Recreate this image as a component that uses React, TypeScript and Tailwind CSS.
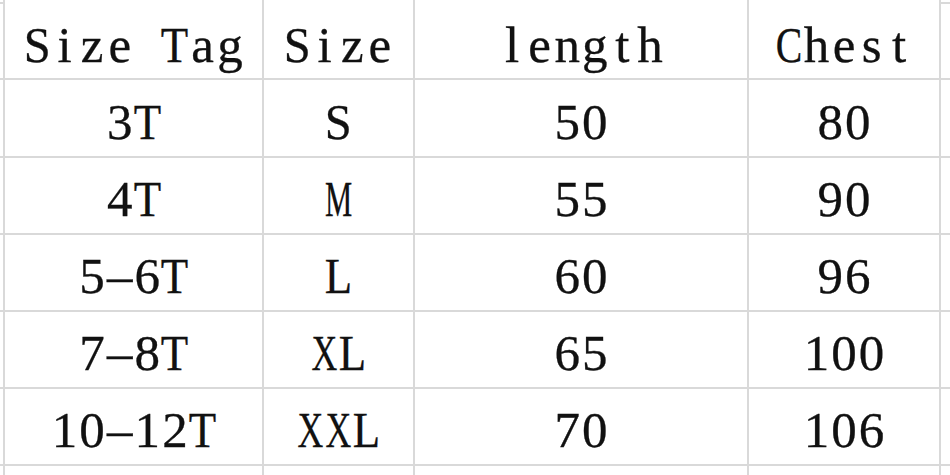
const header = ["Size Tag", "Size", "length", "Chest"];

const rows = [
    ["3T", "S", "50", "80"],
    ["4T", "M", "55", "90"],
    ["5-6T", "L", "60", "96"],
    ["7-8T", "XL", "65", "100"],
    ["10-12T", "XXL", "70", "106"],
];

// wide capitals get squeezed into the half-width slot
const squeeze: Record<string, string> = {
    M: "scale-x-[0.6]",
    X: "scale-x-[0.7]",
    C: "scale-x-[0.78]",
    T: "scale-x-[0.88]",
    L: "scale-x-[0.88]",
    S: "scale-x-[0.95]",
};

// SimSun-like look: serif glyphs set in fixed half-width slots
function Mono({ text }: { text: string }) {
    return (
        <span className="flex">
            {text.split("").map((ch, i) => (
                <span key={i} className="flex justify-center w-[27.6px]">
                    <span className={"inline-block shrink-0 whitespace-pre " + (squeeze[ch] ?? "")}>
                        {ch === "-" ? "\u2013" : ch}
                    </span>
                </span>
            ))}
        </span>
    );
}

function Cell({ text }: { text: string }) {
    return (
        <div className="bg-white flex items-center justify-center pt-[8px] text-[51px] leading-none text-[#111] [-webkit-text-stroke:0.3px_#111]">
            {text && <Mono text={text} />}
        </div>
    );
}

function Row({ cells }: { cells: string[] }) {
    return (
        <>
            <div className="bg-white" />
            {cells.map((c, i) => (
                <Cell key={i} text={c} />
            ))}
            <div className="bg-white" />
        </>
    );
}

export default function App() {
    return (
        <div
            className="w-[950px] h-[475px] overflow-hidden bg-[#d9d9d9] grid gap-[2px] grid-cols-[3px_257px_149px_332px_190px_9px] grid-rows-[2px_74px_76px_75px_75px_75px_75px_9px]"
            style={{ fontFamily: '"Liberation Serif", serif' }}
        >
            <Row cells={["", "", "", ""]} />
            <Row cells={header} />
            {rows.map((r, i) => (
                <Row key={i} cells={r} />
            ))}
            <Row cells={["", "", "", ""]} />
        </div>
    );
}
